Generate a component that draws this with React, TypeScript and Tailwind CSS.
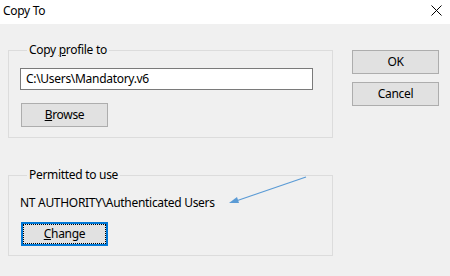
const font = { fontFamily: '"Noto Sans", "Open Sans", sans-serif', letterSpacing: "-0.3px" };

const WinButton = ({ children, focused = false }: { children: React.ReactNode; focused?: boolean }) =>
  focused ? (
    <button className="w-[87px] h-[24px] border-2 border-[#0078d7] bg-[#e1e1e1] p-0">
      <span className="flex h-full w-full items-center justify-center border border-dotted border-black text-[12px] text-black">
        {children}
      </span>
    </button>
  ) : (
    <button className="flex w-[87px] h-[24px] items-center justify-center border border-[#adadad] bg-[#e1e1e1] text-[12px] text-black">
      {children}
    </button>
  );

export default function App() {
  return (
    <div className="relative w-[450px] h-[276px] bg-[#f0f0f0] text-[12px] leading-[16px] text-black" style={font}>
      {/* title bar */}
      <div className="flex h-[24px] items-center justify-between bg-white pl-[3px] pr-[8px]">
        <span className="text-[12px] leading-[16px] -mt-[2px]">Copy To</span>
        <svg width="11" height="11" viewBox="0 0 11 11" className="-mt-[3px]">
          <path d="M0.5 0.5 L10.5 10.5 M10.5 0.5 L0.5 10.5" stroke="#000" strokeWidth="1" />
        </svg>
      </div>

      <div className="flex pl-2 pt-[18px]">
        <div className="flex w-[325px] flex-col">
          <fieldset className="border border-[#dcdcdc] pl-[11px] pb-[10px]">
            <legend className="ml-[7px] px-[2px] leading-[16px]">
              Copy <u>p</u>rofile to
            </legend>
            <div className="mt-[10px] flex h-[22px] w-[293px] items-center border border-[#7a7a7a] bg-white px-[5px]">
              C:\Users\Mandatory.v6
            </div>
            <div className="mt-[13px] ml-[1px]">
              <WinButton>
                <u>B</u>rowse
              </WinButton>
            </div>
          </fieldset>

          <fieldset className="mt-[29px] border border-[#dcdcdc] pl-[11px] pb-[9px]">
            <legend className="ml-[7px] px-[2px] leading-[16px]">Permitted to use</legend>
            <div className="mt-[12px]">NT AUTHORITY\Authenticated Users</div>
            <div className="mt-[11px] ml-[1px]">
              <WinButton focused>
                <u>C</u>hange
              </WinButton>
            </div>
          </fieldset>
        </div>

        <div className="ml-[19px] mt-[8px] flex flex-col gap-[8px]">
          <WinButton>OK</WinButton>
          <WinButton>Cancel</WinButton>
        </div>
      </div>

      {/* annotation arrow */}
      <svg className="absolute left-0 top-0 pointer-events-none" width="450" height="276">
        <line x1="306" y1="177" x2="236" y2="201" stroke="#5b9bd5" strokeWidth="1.3" />
        <polygon points="229,203 237,197 239,203" fill="#5b9bd5" />
      </svg>
    </div>
  );
}
